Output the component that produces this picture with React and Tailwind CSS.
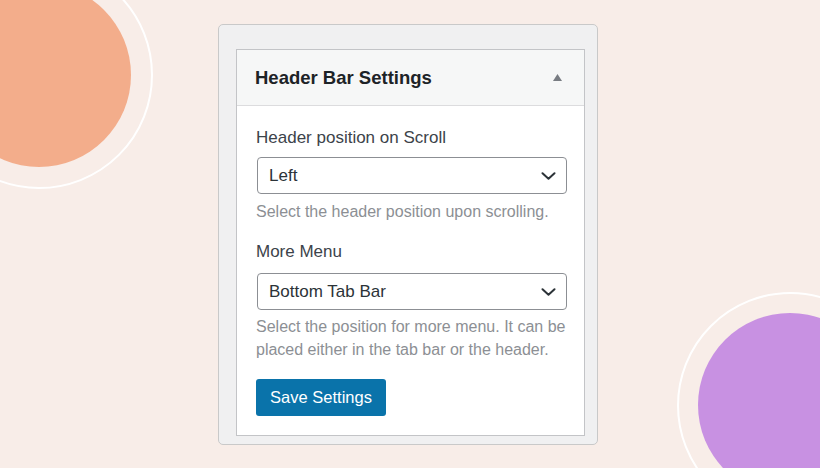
const Chevron = () => (
  <svg className="h-[8px] w-[15px] text-[#2c3338]" viewBox="0 0 15 8" fill="none" stroke="currentColor">
    <path d="M1.5 1.2L7.5 6.8L13.5 1.2" strokeWidth="2" strokeLinecap="round" strokeLinejoin="round" />
  </svg>
);

const SelectBox = ({ value }) => (
  <div className="flex h-[37px] w-[310px] items-center justify-between rounded-[4px] border border-[#8c8f94] bg-white pl-[11px] pr-[10px] text-[17px] text-[#2c3338]">
    <span>{value}</span>
    <Chevron />
  </div>
);

export default function App() {
  return (
    <div className="relative h-[468px] w-full overflow-hidden bg-[#f8ede8] font-['Liberation_Sans',Arial,sans-serif]">
      {/* decorative circles */}
      <div className="absolute left-[-75px] top-[-39px] h-[228px] w-[228px] rounded-full border-2 border-white" />
      <div className="absolute left-[-53px] top-[-17px] h-[184px] w-[184px] rounded-full bg-[#f3ad8b]" />
      <div className="absolute left-[677px] top-[292px] h-[227px] w-[227px] rounded-full border-2 border-white" />
      <div className="absolute left-[698px] top-[313px] h-[184px] w-[184px] rounded-full bg-[#c891e2]" />

      <div className="relative ml-[218px] pt-[24px]">
        <div className="w-[380px] rounded-[5px] border border-[#c9c9c9] bg-[#f0f0f1] pb-[8px] pl-[17px] pr-[12px] pt-[24px]">
          <div className="border border-[#c3c4c7] bg-white">
            <div className="flex h-[56px] items-center justify-between border-b border-[#dcdcde] bg-[#f6f7f7] pl-[18px] pr-[22px]">
              <h2 className="text-[18.5px] font-bold text-[#1d2327]">Header Bar Settings</h2>
              <svg className="h-[7px] w-[9px] text-[#787c82]" viewBox="0 0 9 7" fill="currentColor">
                <path d="M4.5 0L9 7H0Z" />
              </svg>
            </div>
            <div className="pb-[19px] pl-[19px] pr-[17px] pt-[20px]">
              <div className="text-[17px] leading-[24px] text-[#3c434a]">Header position on Scroll</div>
              <div className="mt-[7px] pl-px">
                <SelectBox value="Left" />
              </div>
              <p className="mt-[6px] text-[16px] leading-[23px] text-[#8c8f94]">
                Select the header position upon scrolling.
              </p>
              <div className="mt-[17px] text-[17px] leading-[24px] text-[#3c434a]">More Menu</div>
              <div className="mt-[9px] pl-px">
                <SelectBox value="Bottom Tab Bar" />
              </div>
              <p className="mt-[5px] text-[16px] leading-[23px] text-[#8c8f94]">
                Select the position for more menu. It can be
                <br />
                placed either in the tab bar or the header.
              </p>
              <button className="mt-[18px] flex h-[37px] w-[130px] items-center justify-center rounded-[3px] bg-[#0a73aa] text-[16.5px] text-white">
                Save Settings
              </button>
            </div>
          </div>
        </div>
      </div>
    </div>
  );
}
